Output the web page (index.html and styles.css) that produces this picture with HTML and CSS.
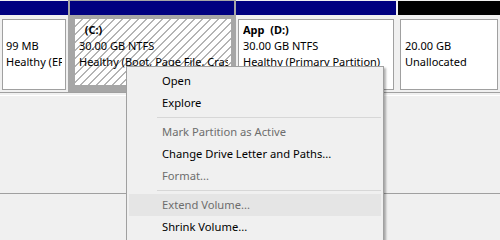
FILE: index.html
```html
<!DOCTYPE html>
<html lang="en">
<head>
  <meta charset="UTF-8" />
  <title>Disk Management</title>
  <link rel="stylesheet" href="styles.css">
</head>
<body>
  <div class="disk-row">
    <div class="part part-efi">
      <div class="part-head"></div>
      <div class="part-body">
        <div class="part-box">
          <div class="part-line part-label"> </div>
          <div class="part-line">99 MB</div>
          <div class="part-line">Healthy (EFI System Partition)</div>
        </div>
      </div>
    </div>
    <div class="part part-c selected">
      <div class="part-head"></div>
      <div class="part-body">
        <div class="part-box hatched">
          <div class="part-line part-label">  (C:)</div>
          <div class="part-line">30.00 GB NTFS</div>
          <div class="part-line">Healthy (Boot, Page File, Crash Dump, Primary Partition)</div>
        </div>
      </div>
    </div>
    <div class="part part-d">
      <div class="part-head"></div>
      <div class="part-body">
        <div class="part-box">
          <div class="part-line part-label">App  (D:)</div>
          <div class="part-line">30.00 GB NTFS</div>
          <div class="part-line">Healthy (Primary Partition)</div>
        </div>
      </div>
    </div>
    <div class="part part-free">
      <div class="part-head unallocated"></div>
      <div class="part-body">
        <div class="part-box">
          <div class="part-line part-label"> </div>
          <div class="part-line">20.00 GB</div>
          <div class="part-line">Unallocated</div>
        </div>
      </div>
    </div>
  </div>
  <div class="disk-divider"></div>
  <div class="disk-pane"></div>
  <div class="disk-pane-next"></div>

  <div class="context-menu">
    <div class="menu-item">Open</div>
    <div class="menu-item">Explore</div>
    <div class="menu-sep"></div>
    <div class="menu-item disabled">Mark Partition as Active</div>
    <div class="menu-item">Change Drive Letter and Paths...</div>
    <div class="menu-item disabled">Format...</div>
    <div class="menu-sep"></div>
    <div class="menu-item disabled hover">Extend Volume...</div>
    <div class="menu-item">Shrink Volume...</div>
  </div>
</body>
</html>
```

FILE: styles.css
```css
body {
  margin: 0;
  background: #f0f0f0;
  font-family: "Segoe UI", "Noto Sans", sans-serif;
  font-size: 11px;
  color: #000;
  height: 240px;
  overflow: hidden;
}
.disk-row {
  display: flex;
  gap: 2px;
  height: 92px;
  padding-top: 1px;
  box-sizing: border-box;
}
.part {
  display: flex;
  flex-direction: column;
  min-width: 0;
}
.part-efi { width: 68px; }
.part-c { width: 160px; }
.part-d { width: 160px; }
.part-free { flex: 1; }
.part-head {
  height: 14px;
  background: #000080;
}
.part-head.unallocated {
  background: #000;
}
.part-body {
  flex: 1;
  padding: 4px 2px 2px 2px;
  display: flex;
  min-height: 0;
}
.part-box {
  flex: 1;
  min-width: 0;
  background: #fff;
  border: 1px solid #a0a0a0;
  padding: 2px 3px 0 3px;
  overflow: hidden;
}
.part-line {
  line-height: 16px;
  height: 16px;
  white-space: pre;
  overflow: hidden;
}
.part-label {
  font-weight: bold;
}
.part-d .part-box { padding-left: 4px; }
.part-free .part-box { padding-left: 4px; }
.part.selected {
  background: #a6a6a6;
  margin: -1px -2px 0 -2px;
  padding: 1px 2px 0 2px;
  width: 164px;
}
.selected .part-body {
  padding: 4px 3px 4px 5px;
  margin-bottom: 3px;
}
.part-box.hatched {
  border: none;
  padding: 3px 3px 0 4px;
  background: repeating-linear-gradient(135deg, #fff 0 4.6px, #b4b4b4 4.6px 5.66px);
}
.disk-divider {
  height: 4px;
  border-top: 1px solid #a0a0a0;
  border-bottom: 1px solid #fff;
  box-sizing: border-box;
}
.disk-pane {
  height: 97px;
  border-bottom: 1px solid #a0a0a0;
}
.disk-pane-next {
  height: 46px;
}
.context-menu {
  position: absolute;
  left: 126px;
  top: 66px;
  width: 258px;
  height: 174px;
  box-sizing: border-box;
  background: #f0f0f0;
  border: 1px solid #a0a0a0;
  border-bottom: none;
  box-shadow: 2px 2px 2px rgba(0, 0, 0, 0.3);
  padding: 3px 2px 0 2px;
  font-size: 11.2px;
}
.menu-item {
  height: 22px;
  line-height: 22px;
  padding-left: 33px;
  white-space: nowrap;
}
.menu-item.disabled {
  color: #6d6d6d;
}
.menu-item.hover {
  background: #e5e5e5;
}
.menu-sep {
  height: 1px;
  background: #d7d7d7;
  margin: 3px 0 3px 28px;
}
```
